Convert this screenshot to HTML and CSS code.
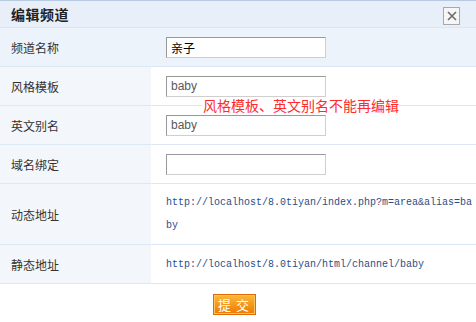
FILE: index.html
```html
<!DOCTYPE html>
<html lang="zh-CN">
<head>
    <meta charset="UTF-8">
    <title>编辑频道</title>
    <link rel="stylesheet" href="styles.css">
</head>
<body>

<div class="dialog">
    <div class="dialog-head">
        <h3>编辑频道</h3>
        <span class="close">
            <svg width="10" height="10" viewBox="0 0 10 10">
                <path d="M1 1 L9 9 M9 1 L1 9" stroke="#6b6b6b" stroke-width="1.6" fill="none"/>
            </svg>
        </span>
    </div>

    <form class="channel-form">
        <div class="row row-hover">
            <div class="label">频道名称</div>
            <div class="value"><input type="text" class="txt txt-name" value="亲子"></div>
        </div>
        <div class="row">
            <div class="label">风格模板</div>
            <div class="value"><input type="text" class="txt" value="baby" readonly></div>
        </div>
        <div class="row">
            <div class="label">英文别名</div>
            <div class="value"><input type="text" class="txt" value="baby" readonly></div>
        </div>
        <div class="row">
            <div class="label">域名绑定</div>
            <div class="value"><input type="text" class="txt" value=""></div>
        </div>
        <div class="row row-tall">
            <div class="label">动态地址</div>
            <div class="value url">http://localhost/8.0tiyan/index.php?m=area&amp;alias=baby</div>
        </div>
        <div class="row">
            <div class="label">静态地址</div>
            <div class="value url">http://localhost/8.0tiyan/html/channel/baby</div>
        </div>

        <div class="tip">风格模板、英文别名不能再编辑</div>

        <div class="actions">
            <button type="button" class="btn-submit">提 交</button>
        </div>
    </form>
</div>

</body>
</html>
```

FILE: styles.css
```css
body {
    margin: 0;
    background-color: #fff;
    font-family: "Liberation Sans", "Noto Sans CJK SC", sans-serif;
    font-size: 12px;
    color: #333;
}
.dialog {
    width: 476px;
    height: 322px;
    overflow: hidden;
}
.dialog-head {
    height: 28px;
    display: flex;
    align-items: center;
    justify-content: space-between;
    padding: 0 16px 0 11px;
    background-color: #e9eff8;
    border-top: 1px solid #b7c9e2;
    border-bottom: 1px solid #dbe6f3;
    box-sizing: border-box;
}
.dialog-head h3 {
    margin: 0;
    font-size: 14px;
    font-weight: bold;
    color: #222;
    letter-spacing: 0.5px;
}
.close {
    width: 15px;
    height: 16px;
    margin-top: 3px;
    border: 1px solid #a9a9a9;
    background-color: #f6f6f6;
    display: flex;
    align-items: center;
    justify-content: center;
}
.channel-form {
    position: relative;
    margin: 0;
}
.row {
    display: flex;
    height: 38px;
    border-bottom: 1px solid #dce8f5;
}
.row-tall {
    height: 60px;
}
.label {
    width: 140px;
    padding-left: 11px;
    display: flex;
    align-items: center;
    background-color: #f3f7fb;
    color: #333;
}
.value {
    flex: 1;
    padding-left: 15px;
    display: flex;
    align-items: center;
}
.row-hover .label,
.row-hover .value {
    background-color: #edf3fa;
}
.txt {
    width: 160px;
    height: 21px;
    padding: 0 4px;
    box-sizing: border-box;
    border: 1px solid #cfcfcf;
    border-top-color: #999;
    border-left-color: #999;
    background-color: #fff;
    font-family: "Liberation Sans", "Noto Sans CJK SC", sans-serif;
    font-size: 12px;
    color: #5a5a5a;
    outline: none;
}
.txt-name {
    color: #000;
}
.url {
    font-family: "Liberation Mono", "Noto Sans CJK SC", monospace;
    font-size: 10px;
    line-height: 23px;
    color: #1f4f8c;
    word-break: break-all;
    padding-right: 0;
}
.tip {
    position: absolute;
    left: 203px;
    top: 70px;
    font-size: 14px;
    color: #ff2b2b;
    background-color: #fff;
    line-height: 16px;
}
.actions {
    display: flex;
    justify-content: center;
    padding: 10px 8px 0 0;
}
.btn-submit {
    width: 43px;
    height: 21px;
    padding: 0;
    border: 1px solid #de6a00;
    box-shadow: inset 0 0 0 1px #ffc45c;
    background: linear-gradient(#fcb83a, #ed7a00);
    color: #fff;
    font-family: "Noto Sans CJK SC", sans-serif;
    font-size: 13px;
    line-height: 19px;
    letter-spacing: 1px;
    cursor: pointer;
}
```
